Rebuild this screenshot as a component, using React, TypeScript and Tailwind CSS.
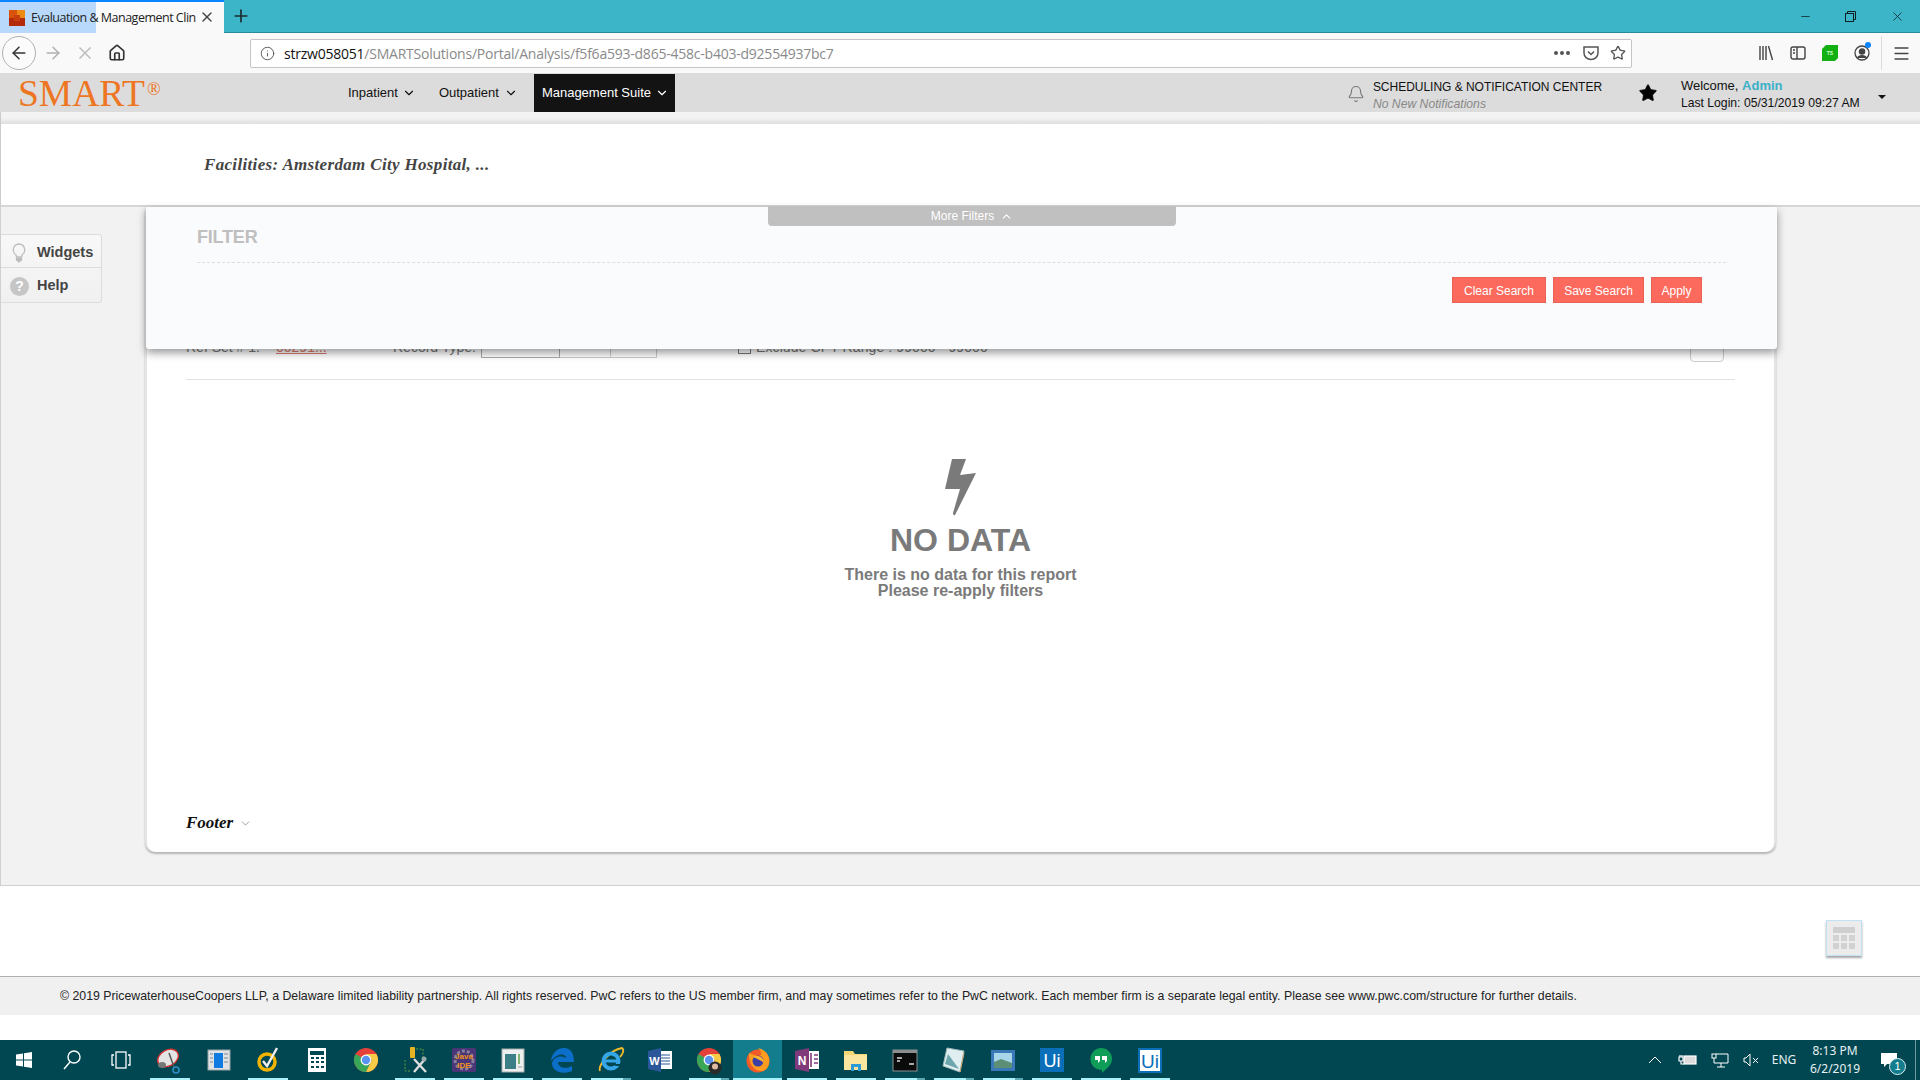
import React from "react";
import { ArrowLeft, ArrowRight, X, Home, Info, Bell, Star, ChevronDown, ChevronUp, Plus, Menu, Minus } from "lucide-react";

const SANS = "[font-family:'Liberation_Sans',Arial,sans-serif]";

function Bolt() {
  return (
    <svg width="31" height="57" viewBox="0 0 31 57">
      <path d="M7 0H21L15 16L31 14L10 56Q8 57 8 54L15 30H0Z" fill="#7a7a7a" />
    </svg>
  );
}

function TaskIcon({ kind }: { kind: string }) {
  const s = { width: 30, height: 30, viewBox: "0 0 30 30" };
  switch (kind) {
    case "win":
      return (
        <svg {...s}>
          <path d="M7 9.5L14 8.5V14.5H7ZM15 8.3L23 7V14.5H15ZM7 15.5H14V21.5L7 20.5ZM15 15.5H23V23L15 21.7Z" fill="#fff" />
        </svg>
      );
    case "search":
      return (
        <svg {...s} fill="none" stroke="#fff" strokeWidth="1.4">
          <circle cx="17" cy="12" r="6" />
          <path d="M13 17L7 24" />
        </svg>
      );
    case "taskview":
      return (
        <svg {...s} fill="none" stroke="#fff" strokeWidth="1.3">
          <rect x="10" y="7" width="10" height="16" />
          <path d="M8 10H6V20H8M22 10H24V20H22" />
        </svg>
      );
    case "snip":
      return (
        <svg {...s}>
          <ellipse cx="13" cy="13" rx="11" ry="8" transform="rotate(-30 13 13)" fill="#e4e4e4" stroke="#c33" strokeWidth="1.4" />
          <path d="M14 8L19 22" stroke="#555" strokeWidth="1.5" />
          <circle cx="21" cy="25" r="3" fill="none" stroke="#2a8fc9" strokeWidth="1.6" />
          <ellipse cx="7" cy="20" rx="4" ry="3" fill="#777" />
        </svg>
      );
    case "bluewin":
      return (
        <svg {...s}>
          <rect x="4" y="5" width="22" height="20" fill="#dfe3e6" stroke="#9aa3a8" />
          <rect x="10" y="8" width="9" height="15" fill="#0f7be0" />
          <path d="M6 9H9M6 13H9M6 17H9M20 9H24M20 13H24M20 17H24" stroke="#7d868c" />
        </svg>
      );
    case "norton":
      return (
        <svg {...s}>
          <circle cx="14" cy="17" r="8" fill="none" stroke="#f2b400" strokeWidth="3.5" />
          <path d="M10 16L14 21L24 3" fill="none" stroke="#eee" strokeWidth="2.4" />
        </svg>
      );
    case "calc":
      return (
        <svg {...s}>
          <rect x="6" y="3" width="18" height="24" fill="#fff" />
          <rect x="8" y="6" width="14" height="4" fill="#014751" />
          <path d="M9 13H12M14 13H17M19 13H22M9 17H12M14 17H17M19 17H22M9 22H12M14 22H17M19 22H22" stroke="#014751" strokeWidth="2.2" />
        </svg>
      );
    case "chrome":
    case "chrome2":
      return (
        <svg {...s}>
          <circle cx="15" cy="15" r="12" fill="#e5403a" />
          <path d="M15 15L4.6 9A12 12 0 0 0 15 27L21 15Z" fill="#3aa657" />
          <path d="M15 9H25.4A12 12 0 0 1 15 27L21 15Z" fill="#f6cb45" />
          <circle cx="15" cy="15" r="5.4" fill="#fff" />
          <circle cx="15" cy="15" r="4.2" fill="#5a94ee" />
          {kind === "chrome2" && (
            <g>
              <circle cx="21" cy="23" r="6.5" fill="#2a2a2a" />
              <circle cx="21" cy="21.5" r="3" fill="#e0b9a0" />
            </g>
          )}
        </svg>
      );
    case "tools":
      return (
        <svg {...s}>
          <rect x="10" y="2" width="5" height="11" rx="1" fill="#e6b422" />
          <path d="M16 4H23V13M5 15V26H11" fill="none" stroke="#5f9c3a" strokeDasharray="2 1.5" />
          <path d="M14 27L25 14M14 14L26 27" stroke="#ddd" strokeWidth="2.4" />
          <circle cx="24" cy="14" r="2.5" fill="#9aa" />
        </svg>
      );
    case "java":
      return (
        <svg {...s}>
          <rect x="3" y="3" width="24" height="24" rx="2" fill="#4a3577" />
          <circle cx="15" cy="15" r="9" fill="none" stroke="#88809a" strokeWidth="3" strokeDasharray="3 2" />
          <text x="15" y="14" textAnchor="middle" fontSize="8" fontWeight="700" fill="#f0941e" fontFamily="Liberation Sans">Java</text>
          <text x="15" y="23" textAnchor="middle" fontSize="8" fontWeight="700" fill="#f0941e" fontFamily="Liberation Sans">IDE</text>
        </svg>
      );
    case "greenwin":
      return (
        <svg {...s}>
          <rect x="4" y="4" width="22" height="23" fill="#eef0f0" stroke="#a8adaf" />
          <rect x="7" y="9" width="11" height="15" fill="#3c7f86" />
          <path d="M21 9V19" stroke="#5da34d" strokeWidth="1.5" />
          <path d="M20 22H24" stroke="#999" />
        </svg>
      );
    case "edge":
      return (
        <svg {...s}>
          <path d="M4 16C5 7 11 3 17 3C24 3 27 9 27 17H11C11 22 18 25 25 21V26C16 30 5 27 5 18C7 12 13 10 19 13C19 9 12 7 4 16Z" fill="#0b6fc9" />
        </svg>
      );
    case "ie":
      return (
        <svg {...s}>
          <path d="M4 26C2 21 13 5 26 3C29 5 26 10 24 12" fill="none" stroke="#f2bb2c" strokeWidth="1.8" />
          <circle cx="15" cy="16" r="7.5" fill="none" stroke="#35a7e8" strokeWidth="4" />
          <path d="M9 16H23" stroke="#35a7e8" strokeWidth="3" />
          <path d="M19 20L25 20" stroke="#014751" strokeWidth="2" />
        </svg>
      );
    case "word":
      return (
        <svg {...s}>
          <rect x="13" y="6" width="14" height="18" fill="#fff" />
          <path d="M15 10H25M15 13H25M15 16H25M15 19H25" stroke="#2b579a" />
          <path d="M3 6L16 3V27L3 24Z" fill="#2b579a" />
          <text x="9.5" y="20" textAnchor="middle" fontSize="11" fontWeight="700" fill="#fff" fontFamily="Liberation Sans">W</text>
        </svg>
      );
    case "firefox":
      return (
        <svg {...s}>
          <circle cx="15" cy="16" r="11.5" fill="#f25a2a" />
          <path d="M6 8C5 18 11 27 20 26C25 24 27 19 26 13C24 7 20 4 15 3C19 7 19 10 16 11C12 11 10 9 6 8Z" fill="#ff9b1e" />
          <circle cx="15" cy="16" r="5.5" fill="#3b3fa5" />
          <path d="M10 12C14 9 21 12 21 18C18 15 14 14 10 12Z" fill="#ffb52e" />
        </svg>
      );
    case "onenote":
      return (
        <svg {...s}>
          <rect x="14" y="6" width="13" height="18" fill="#fff" />
          <path d="M19 8V22M22 10H26M22 14H26M22 18H26" stroke="#80397b" strokeWidth="1.6" />
          <path d="M3 6L17 3V27L3 24Z" fill="#80397b" />
          <text x="10" y="20" textAnchor="middle" fontSize="12" fontWeight="700" fill="#fff" fontFamily="Liberation Sans">N</text>
        </svg>
      );
    case "files":
      return (
        <svg {...s}>
          <path d="M3 6H12L14 9H26V25H3Z" fill="#f7d774" />
          <path d="M3 10H26V25H3Z" fill="#fbe6a0" />
          <path d="M10 26V19H20V26H17V22H13V26Z" fill="#2f9ad6" />
        </svg>
      );
    case "cmd":
      return (
        <svg {...s}>
          <rect x="3" y="5" width="24" height="21" fill="#0b0b0b" stroke="#8b8f92" />
          <rect x="3" y="5" width="24" height="3" fill="#8b8f92" />
          <path d="M7 13H12M7 16H10M19 19H24" stroke="#ddd" strokeWidth="1.3" />
        </svg>
      );
    case "notepad":
      return (
        <svg {...s}>
          <path d="M8 3L25 6L21 27L4 21Z" fill="#dfeef0" stroke="#9fb7ba" />
          <path d="M9 9L20 24L6 19Z" fill="#6ea6ad" />
          <path d="M25 8L21 27" stroke="#c9a36d" />
        </svg>
      );
    case "pic":
      return (
        <svg {...s}>
          <rect x="3" y="5" width="24" height="21" fill="#3b78b8" />
          <rect x="6" y="8" width="18" height="15" fill="#a7d6e8" />
          <path d="M6 17L13 14L24 18V23H6Z" fill="#5d8f76" />
        </svg>
      );
    case "ui":
      return (
        <svg {...s}>
          <rect x="3" y="3" width="24" height="24" fill="#0a6fb8" />
          <text x="15" y="22" textAnchor="middle" fontSize="18" fill="#fff" fontFamily="Liberation Sans">Ui</text>
        </svg>
      );
    case "ui2":
      return (
        <svg {...s}>
          <rect x="4" y="4" width="22" height="23" fill="#fff" stroke="#0a6fb8" strokeWidth="2" />
          <text x="15" y="22.5" textAnchor="middle" fontSize="19" fill="#0a6fb8" fontFamily="Liberation Sans">Ui</text>
        </svg>
      );
    case "hang":
      return (
        <svg {...s}>
          <path d="M15 3A11 11 0 0 1 26 14C26 20 20 24 16 28V25A11 11 0 0 1 15 3Z" fill="#0f9d58" />
          <path d="M9 11H14V16L12 18V15H9ZM16 11H21V16L19 18V15H16Z" fill="#fff" />
        </svg>
      );
  }
  return null;
}

type Slot = { kind: string; line?: number; active?: boolean; first?: boolean };

const slots: Slot[] = [
  { kind: "win", first: true },
  { kind: "search" },
  { kind: "taskview" },
  { kind: "snip", line: 1 },
  { kind: "bluewin" },
  { kind: "norton", line: 1 },
  { kind: "calc" },
  { kind: "chrome" },
  { kind: "tools", line: 1 },
  { kind: "java", line: 1 },
  { kind: "greenwin", line: 1 },
  { kind: "edge", line: 1 },
  { kind: "ie", line: 2 },
  { kind: "word" },
  { kind: "chrome2", line: 2 },
  { kind: "firefox", active: true },
  { kind: "onenote", line: 1 },
  { kind: "files", line: 1 },
  { kind: "cmd", line: 2 },
  { kind: "notepad", line: 2 },
  { kind: "pic", line: 2 },
  { kind: "ui", line: 1 },
  { kind: "hang", line: 1 },
  { kind: "ui2", line: 1 },
];

function Taskbar() {
  return (
    <div className="h-[40px] bg-[#014751] flex items-stretch text-[#e6f1f2]">
      {slots.map((t, i) => (
        <div
          key={i}
          className={`relative shrink-0 h-[40px] flex items-center justify-center ${t.first ? "w-[47px]" : "w-[49px]"} ${t.active ? "bg-[#137d8d]" : ""}`}
        >
          <TaskIcon kind={t.kind} />
          {t.line === 1 && <span className="absolute bottom-0 left-[5px] w-[40px] h-[2px] bg-[#a9f2fb]" />}
          {t.line === 2 && (
            <span className="absolute bottom-0 left-[5px] w-[40px] h-[2px] bg-[#a9f2fb] border-r-[8px] border-[#5aa9b4]" />
          )}
          {t.active && <span className="absolute bottom-0 left-0 w-full h-[2px] bg-[#a9f2fb]" />}
        </div>
      ))}
      <div className="flex items-center ml-[466px] shrink-0">
        <div className="w-[30px] flex justify-center">
          <svg width="16" height="10" viewBox="0 0 16 10" fill="none" stroke="#fff">
            <path d="M2 8L8 2L14 8" />
          </svg>
        </div>
        <div className="w-[32px] flex justify-center ml-[2px]">
          <svg width="20" height="14" viewBox="0 0 20 14" fill="none" stroke="#fff" strokeWidth="1.2">
            <rect x="6" y="3" width="12" height="8" fill="#ddd" />
            <path d="M1 4H5V8H1ZM2 2V4M4 2V4M3 8V11H6" />
          </svg>
        </div>
        <div className="w-[32px] flex justify-center">
          <svg width="18" height="15" viewBox="0 0 18 15" fill="none" stroke="#fff">
            <path d="M5 1H17V10H3V5M10 10V14M6 14H14" />
            <rect x="1" y="1" width="4" height="4" />
          </svg>
        </div>
        <div className="w-[30px] flex justify-center">
          <svg width="16" height="14" viewBox="0 0 16 14" fill="none" stroke="#fff">
            <path d="M1 5H3L7 1V13L3 9H1ZM10 5L15 10M15 5L10 10" />
          </svg>
        </div>
        <div className="w-[36px] text-center text-[12px] [font-family:'Noto_Sans',sans-serif]">ENG</div>
        <div className="w-[66px] text-center text-[12px] leading-[18px] [font-family:'Noto_Sans',sans-serif]">
          <div>8:13 PM</div>
          <div>6/2/2019</div>
        </div>
        <div className="relative w-[36px] ml-[3px] h-[40px] flex items-center justify-center">
          <svg width="18" height="16" viewBox="0 0 18 16">
            <path d="M1 1H17V12H7L4 15V12H1Z" fill="#fff" />
          </svg>
          <span className="absolute left-[18px] top-[18px] w-[17px] h-[17px] rounded-full bg-[#137d8d] border border-[#dfeef0] text-[11px] leading-[15px] text-center text-white">
            1
          </span>
        </div>
        <div className="w-px h-[40px] bg-[#6f9aa1] ml-[8px]" />
      </div>
    </div>
  );
}

function BrowserChrome() {
  return (
    <>
      <div className="h-[33px] bg-[#3cb5c8] flex items-stretch border-b border-[#2b8a99]">
        <div className="relative w-[224px] h-[33px] bg-[#f9f9fa] border-t-2 border-[#0a84ff] flex items-center">
          <div className="absolute left-0 top-0 h-full w-[96px] bg-[#b8d9fb]" />
          <svg className="relative ml-[9px]" width="16" height="16" viewBox="0 0 16 16">
            <rect width="16" height="16" fill="#b32b0a" />
            <rect width="8" height="8" fill="#d9530c" />
            <rect x="8" width="8" height="8" fill="#ec8a14" />
            <rect x="5" y="5" width="6" height="6" fill="#c7400d" />
          </svg>
          <span className="relative ml-[6px] mt-[1px] whitespace-nowrap text-[12.5px] text-[#222] [font-family:'Open_Sans',sans-serif] tracking-[-0.5px]">
            Evaluation &amp; Management Clin
          </span>
          <X className="absolute left-[199px] top-[7px] text-[#444]" size={16} strokeWidth={2} />
        </div>
        <div className="w-[34px] flex items-center justify-center">
          <Plus size={20} strokeWidth={2} className="text-[#1c2b30]" />
        </div>
        <div className="flex-1" />
        <div className="flex items-center text-[#0f1f24]">
          <Minus size={13} strokeWidth={1.4} className="mr-[33px]" />
          <svg width="11" height="11" viewBox="0 0 11 11" fill="none" stroke="#0f1f24" className="mr-[34px]">
            <rect x="0.5" y="2.5" width="8" height="8" />
            <path d="M2.5 2.5V0.5H10.5V8.5H8.5" />
          </svg>
          <X size={15} strokeWidth={1.2} className="mr-[15px]" />
        </div>
      </div>
      <div className="h-[40px] bg-[#f9f9fa] flex items-center">
        <div className="ml-[2px] w-[34px] h-[34px] rounded-full border border-[#b1b1b3] flex items-center justify-center bg-[#fbfbfb]">
          <ArrowLeft size={20} strokeWidth={1.8} className="text-[#333]" />
        </div>
        <div className="ml-px w-[32px] flex justify-center">
          <ArrowRight size={20} strokeWidth={1.8} className="text-[#b0b0b0]" />
        </div>
        <div className="w-[32px] flex justify-center">
          <X size={20} strokeWidth={2} className="text-[#bdbdbd]" />
        </div>
        <div className="w-[32px] flex justify-center">
          <Home size={18} strokeWidth={2.2} className="text-[#333]" />
        </div>
        <div className="ml-[117px] w-[1382px] h-[29px] bg-white border border-[#c4c4c4] rounded-[2px] flex items-center">
          <Info size={15} strokeWidth={1.5} className="ml-[9px] text-[#555]" />
          <span className="ml-[9px] text-[14px] whitespace-nowrap [font-family:'Open_Sans',sans-serif] tracking-[-0.23px] text-[#8a8a8a]">
            <span className="text-[#111]">strzw058051</span>/SMARTSolutions/Portal/Analysis/f5f6a593-d865-458c-b403-d92554937bc7
          </span>
          <div className="flex-1" />
          <div className="flex items-center gap-[2px] mr-[7px]">
            <span className="w-[4px] h-[4px] rounded-full bg-[#555]" />
            <span className="w-[4px] h-[4px] rounded-full bg-[#555]" />
            <span className="w-[4px] h-[4px] rounded-full bg-[#555]" />
          </div>
          <svg width="16" height="16" viewBox="0 0 16 16" fill="none" stroke="#555" strokeWidth="1.5" className="ml-[6px]">
            <path d="M1 2H15V8A7 6.5 0 0 1 1 8Z" />
            <path d="M5 6.5L8 9.5L11 6.5" />
          </svg>
          <Star size={16} strokeWidth={2} className="ml-[11px] mr-[5px] text-[#555]" />
        </div>
        <div className="ml-[118px] w-[32px] flex justify-center">
          <svg width="16" height="16" viewBox="0 0 16 16" fill="none" stroke="#444" strokeWidth="1.4">
            <path d="M2 1V15M5 1V15M8 1V15M10.5 1L14.5 15" />
          </svg>
        </div>
        <div className="w-[32px] flex justify-center">
          <svg width="16" height="16" viewBox="0 0 16 16" fill="none" stroke="#444" strokeWidth="1.4">
            <rect x="1" y="2" width="14" height="12" rx="2" />
            <path d="M7 2V14M3 5H5M3 8H5" />
          </svg>
        </div>
        <div className="w-[32px] flex justify-center">
          <svg width="16" height="18" viewBox="0 0 16 18">
            <path d="M4 1H16V14L13 17H0V5Z" fill="#12b012" />
            <text x="8" y="11" textAnchor="middle" fontSize="5" fontWeight="700" fill="#d6ffd6" fontFamily="Liberation Sans">TS</text>
          </svg>
        </div>
        <div className="relative w-[32px] flex justify-center">
          <svg width="16" height="16" viewBox="0 0 16 16" fill="none" stroke="#444" strokeWidth="1.3">
            <circle cx="8" cy="8" r="7" />
            <circle cx="8" cy="6.5" r="2.6" fill="#444" />
            <path d="M3.5 13C5 10 11 10 12.5 13" fill="#444" />
          </svg>
          <span className="absolute left-[19px] top-[-3px] w-[6px] h-[6px] rounded-full bg-[#0a84ff]" />
        </div>
        <div className="ml-[3px] w-px h-[34px] bg-[#dcdcdc]" />
        <div className="ml-[10px]">
          <Menu size={19} strokeWidth={2} className="text-[#444]" />
        </div>
      </div>
    </>
  );
}

function NavBar() {
  return (
    <div className="h-[39px] bg-[#dcdcdc] flex items-center text-[12.2px] text-[#111] whitespace-nowrap">
      <div className="w-[348px] pl-[18px] flex items-start h-[39px] [font-family:'Liberation_Serif',serif] text-[#ee7623]">
        <span className="text-[37.5px] leading-[41px]">SMART</span>
        <span className="text-[18px] leading-[18px] mt-[7px] ml-[2px]">®</span>
      </div>
      <span className="text-[13px] mt-[1px]">Inpatient</span>
      <ChevronDown size={14} strokeWidth={2} className="ml-[4px]" />
      <span className="ml-[23px] text-[13px] mt-[1px]">Outpatient</span>
      <ChevronDown size={14} strokeWidth={2} className="ml-[5px]" />
      <div className="ml-[16px] w-[141px] h-[38px] mt-px bg-[#131313] text-white flex items-center pl-[8px] text-[13px]">
        <span>Management Suite</span>
        <ChevronDown size={14} strokeWidth={2} className="ml-[4px]" />
      </div>
      <Bell size={18} strokeWidth={1.5} className="ml-[672px] mt-[3px] text-[#777]" />
      <div className="ml-[8px] w-[228px] mt-[5px]">
        <div className="text-[12px] leading-[14px] tracking-[-0.02px]">SCHEDULING &amp; NOTIFICATION CENTER</div>
        <div className="italic text-[#888] leading-[14px] mt-[3px]">No New Notifications</div>
      </div>
      <Star size={20} fill="#000" strokeWidth={1} className="ml-[37px] mt-[1px] text-black" />
      <div className="ml-[23px] mt-[2px]">
        <div className="text-[13px] leading-[15px]">
          Welcome, <span className="font-bold text-[#3bb0c9]">Admin</span>
        </div>
        <div className="leading-[14px] mt-[3px]">Last Login: 05/31/2019 09:27 AM</div>
      </div>
      <span className="ml-[18px] mt-[8px] w-0 h-0 border-x-[4px] border-x-transparent border-t-[4px] border-t-[#111]" />
    </div>
  );
}

function FilterPanel() {
  return (
    <div className="absolute left-[145px] top-0 w-[1631px] h-[142px] bg-[#fafbfc] rounded-b-[3px] shadow-[0_4px_8px_rgba(0,0,0,0.4)] px-[51px]">
      <div className="absolute left-[622px] top-[-1px] w-[408px] h-[20px] bg-[#c0c0c0] rounded-b-[4px] flex items-center justify-center text-[12px] text-white">
        More Filters
        <ChevronUp size={13} strokeWidth={2} className="ml-[6px]" />
      </div>
      <div className="h-[56px] border-b border-dashed border-[#dedede] flex items-start pt-[20px] text-[18px] leading-[20px] font-bold text-[#bfbfbf] tracking-[-0.2px]">
        FILTER
      </div>
      <div className="flex justify-end gap-[7px] mt-[14px] pr-[24px] text-[12px] text-white">
        <button className="w-[94px] h-[26px] pt-[1px] bg-[#fc6a5e] border border-[#ec6155]">Clear Search</button>
        <button className="w-[91px] h-[26px] pt-[1px] bg-[#fc6a5e] border border-[#ec6155]">Save Search</button>
        <button className="w-[51px] h-[26px] pt-[1px] bg-[#fc6a5e] border border-[#ec6155]">Apply</button>
      </div>
    </div>
  );
}

function Card() {
  return (
    <div className="ml-[144px] w-[1631px] h-[645px] bg-white rounded-b-[10px] border-l-2 border-r-2 border-[#e4e4e4] shadow-[0_2px_2px_rgba(0,0,0,0.25)] flex flex-col px-[39px] pt-[121px]">
      <div className="h-[30px] flex items-start text-[14px] text-[#777] whitespace-nowrap">
        <span className="w-[90px] mt-[9px]">Ref Set # 1:</span>
        <span className="w-[52px] mt-[9px] text-[#e07a6c] underline">00291...</span>
        <span className="ml-[65px] w-[83px] mt-[9px]">Record Type:</span>
        <div className="ml-[5px] flex h-[30px]">
          <div className="w-[79px] border border-[#aaa]" />
          <div className="w-[51px] border-y border-r border-[#ccc]" />
          <div className="w-[46px] border-y border-r border-[#ccc]" />
        </div>
        <span className="ml-[81px] mt-[12px] w-[13px] h-[14px] border border-[#777] shrink-0" />
        <span className="ml-[5px] mt-[9px] tracking-[0.1px]">Exclude CPT Range : 99000 - 99000</span>
        <div className="flex-1" />
        <div className="w-[34px] h-[34px] border border-[#ccc] rounded-[4px] mr-[11px]" />
      </div>
      <div className="mt-[21px] h-px bg-[#e2e2e2] shrink-0" />
      <div className="mt-[79px] flex flex-col items-center text-[#7a7a7a] font-bold">
        <Bolt />
        <div className="mt-[6px] text-[32px] leading-[36px]">NO DATA</div>
        <div className="mt-[9px] text-[16px] leading-[16px]">There is no data for this report</div>
        <div className="text-[16px] leading-[16px]">Please re-apply filters</div>
      </div>
      <div className="flex-1" />
      <div className="pb-[19px] flex items-center [font-family:'Liberation_Serif',serif] italic font-bold text-[17px] leading-[20px] text-[#111]">
        Footer
        <ChevronDown size={13} strokeWidth={1.5} className="ml-[6px] text-[#888]" />
      </div>
    </div>
  );
}

function Sidebar() {
  return (
    <div className="absolute left-0 top-[27px] w-[101px] h-[69px] rounded-r-[3px] border border-l-0 border-[#dcdcdc] bg-gradient-to-b from-[#f8f8f8] to-[#f0f0f0] text-[14.5px] font-bold text-[#444]">
      <div className="h-[33px] pt-[4px] border-b border-[#dcdcdc] flex items-center">
        <svg width="14" height="20" viewBox="0 0 14 20" fill="none" stroke="#bdbdbd" strokeWidth="1.3" className="ml-[11px]">
          <path d="M7 1A6 6 0 0 1 10 12L9.5 14H4.5L4 12A6 6 0 0 1 7 1Z" />
          <path d="M4.5 15.5H9.5V17L7 19L4.5 17Z" fill="#bdbdbd" />
        </svg>
        <span className="ml-[11px]">Widgets</span>
      </div>
      <div className="h-[34px] pt-[2px] flex items-center">
        <span className="ml-[9px] w-[19px] h-[19px] rounded-full bg-[#c6c6c6] text-white text-[14px] leading-[19px] text-center">?</span>
        <span className="ml-[8px]">Help</span>
      </div>
    </div>
  );
}

export default function App() {
  return (
    <div className={`w-[1920px] h-[1080px] overflow-hidden flex flex-col bg-white ${SANS}`}>
      <BrowserChrome />
      <NavBar />
      <div className="h-[12px] bg-gradient-to-b from-[#f4f4f4] via-[#f2f2f2] to-[#dedede] border-l border-[#ccc]" />
      <div className="h-[83px] bg-white border-l border-[#ccc] border-b-2 border-b-[#d6d6d6] pl-[203px] pt-[31px] [font-family:'Liberation_Serif',serif] font-bold italic text-[17px] leading-[20px] text-[#444] tracking-[0.33px]">
        Facilities: Amsterdam City Hospital, ...
      </div>
      <div className="relative h-[679px] bg-[#f2f2f2] border-l border-b border-[#d0d0d0]">
        <Card />
        <FilterPanel />
        <Sidebar />
      </div>
      <div className="h-[90px] bg-white flex justify-end items-start pt-[34px] pr-[58px]">
        <div className="w-[36px] h-[36px] bg-[#ececec] border border-[#bfe3f2] shadow-[0_2px_2px_rgba(0,0,0,0.35)] flex flex-col items-center justify-center gap-[2px]">
          <div className="w-[22px] h-[6px] bg-[#cfcfcf]" />
          <div className="grid grid-cols-3 gap-[2px]">
            {[0, 1, 2, 3, 4, 5].map((i) => (
              <span key={i} className="w-[6px] h-[6px] bg-[#d2d2d2]" />
            ))}
          </div>
        </div>
      </div>
      <div className="h-[39px] bg-[#f0f0f0] border-t border-[#b0b0b0] pl-[60px] flex items-center text-[12.32px] text-[#222] whitespace-nowrap">
        © 2019 PricewaterhouseCoopers LLP, a Delaware limited liability partnership. All rights reserved. PwC refers to the US member firm, and may sometimes refer to the PwC network. Each member firm is a separate legal entity. Please see www.pwc.com/structure for further details.
      </div>
      <div className="h-[25px] bg-white" />
      <Taskbar />
    </div>
  );
}
